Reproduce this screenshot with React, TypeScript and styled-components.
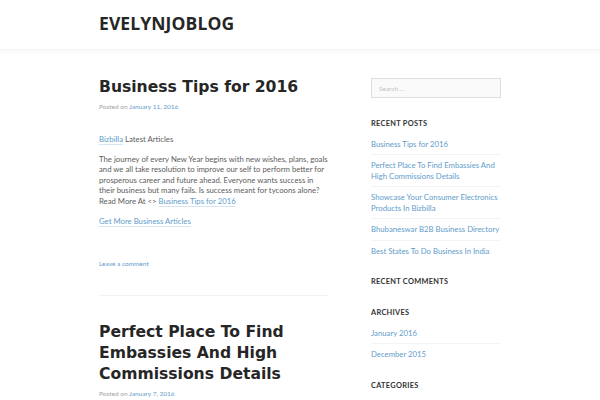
import styled, { createGlobalStyle } from 'styled-components'

const GlobalStyle = createGlobalStyle`
  html, body {
    margin: 0;
    padding: 0;
    background: #fff;
  }

  body {
    font-family: Lato, "Liberation Sans", sans-serif;
    color: #5c5c5c;
  }
`

const linkColor = '#5f9ccb'

const Header = styled.header`
  height: 50px;
  box-shadow: 0 2px 3px rgba(0, 0, 0, 0.03);
  border-bottom: 1px solid #f7f7f7;
  box-sizing: border-box;
`

const Inner = styled.div`
  width: 402px;
  margin: 0 auto;
`

const SiteTitle = styled.h1`
  margin: 0;
  padding-top: 13px;
  font-family: "Open Sans", "Liberation Sans", sans-serif;
  font-weight: 700;
  font-size: 17.5px;
  line-height: 20px;
  color: #262626;
  letter-spacing: 0.1px;
`

const Page = styled.div`
  width: 402px;
  margin: 0 auto;
  display: flex;
  gap: 42px;
`

const Main = styled.main`
  width: 230px;
  padding-top: 27px;
`

const Post = styled.article`
  padding-bottom: 26px;

  & + & {
    border-top: 1px solid #f2f2f2;
    padding-top: 26px;
  }
`

const PostTitle = styled.h2`
  margin: 0;
  font-family: "DejaVu Sans", Verdana, sans-serif;
  font-weight: 700;
  font-size: 15.6px;
  line-height: 21px;
  color: #262626;
`

const Meta = styled.div`
  margin-top: 3.5px;
  font-size: 6.5px;
  line-height: 10px;
  color: #a3a3a3;
`

const MetaLink = styled.a`
  color: ${linkColor};
  text-decoration: none;
`

const Content = styled.div`
  margin-top: 22px;
  font-size: 7.75px;
  line-height: 10.5px;

  p {
    margin: 0 0 9.5px;
  }
`

const A = styled.a`
  color: ${linkColor};
  text-decoration: underline;
  text-decoration-color: #d6e7f3;
  text-underline-offset: 1.5px;
`

const Footer = styled.div`
  margin-top: 33px;
  font-size: 6.5px;
  line-height: 10px;

  a {
    color: ${linkColor};
    text-decoration: none;
  }
`

const Sidebar = styled.aside`
  width: 130px;
  padding-top: 28px;
`

const Search = styled.input`
  box-sizing: border-box;
  width: 130px;
  height: 20px;
  border: 1px solid #dedede;
  background: #fafafa;
  padding: 0 7px;
  font-family: Lato, "Liberation Sans", sans-serif;
  font-size: 6.5px;
  margin: 0 0 21px;
  display: block;
  outline: none;

  &::placeholder {
    color: #c2c2c2;
  }
`

const Widget = styled.section`
  margin-bottom: 21px;
`

const WidgetTitle = styled.h3`
  margin: 0 0 4.5px;
  font-size: 7.4px;
  line-height: 10px;
  font-weight: 700;
  letter-spacing: 0.3px;
  text-transform: uppercase;
  color: #333;
`

const List = styled.ul`
  list-style: none;
  margin: 0;
  padding: 0;
`

const Item = styled.li`
  padding: 5px 0;
  border-bottom: 1px solid #f3f3f3;
  font-size: 7.75px;
  line-height: 10.5px;

  &:last-child {
    border-bottom: none;
    padding-bottom: 0;
  }

  a {
    color: ${linkColor};
    text-decoration: none;
  }
`

const recentPosts = [
  'Business Tips for 2016',
  'Perfect Place To Find Embassies And High Commissions Details',
  'Showcase Your Consumer Electronics Products In Bizbilla',
  'Bhubaneswar B2B Business Directory',
  'Best States To Do Business In India'
]

const archives = ['January 2016', 'December 2015']

export default function App() {
  return (
    <>
      <GlobalStyle />
      <Header>
        <Inner>
          <SiteTitle>EVELYNJOBLOG</SiteTitle>
        </Inner>
      </Header>
      <Page>
        <Main>
          <Post>
            <PostTitle>Business Tips for 2016</PostTitle>
            <Meta>
              Posted on <MetaLink href="#">January 11, 2016</MetaLink>
            </Meta>
            <Content>
              <p>
                <A href="#">Bizbilla</A> Latest Articles
              </p>
              <p>
                The journey of every New Year begins with new wishes, plans, goals
                and we all take resolution to improve our self to perform better for
                prosperous career and future ahead. Everyone wants success in
                their business but many fails. Is success meant for tycoons alone?
                Read More At &lt;&gt; <A href="#">Business Tips for 2016</A>
              </p>
              <p>
                <A href="#">Get More Business Articles</A>
              </p>
            </Content>
            <Footer>
              <a href="#">Leave a comment</a>
            </Footer>
          </Post>
          <Post>
            <PostTitle>Perfect Place To Find Embassies And High Commissions Details</PostTitle>
            <Meta>
              Posted on <MetaLink href="#">January 7, 2016</MetaLink>
            </Meta>
          </Post>
        </Main>
        <Sidebar>
          <Search placeholder="Search …" />
          <Widget>
            <WidgetTitle>Recent Posts</WidgetTitle>
            <List>
              {recentPosts.map(p => (
                <Item key={p}>
                  <a href="#">{p}</a>
                </Item>
              ))}
            </List>
          </Widget>
          <Widget>
            <WidgetTitle>Recent Comments</WidgetTitle>
          </Widget>
          <Widget>
            <WidgetTitle>Archives</WidgetTitle>
            <List>
              {archives.map(a => (
                <Item key={a}>
                  <a href="#">{a}</a>
                </Item>
              ))}
            </List>
          </Widget>
          <Widget>
            <WidgetTitle>Categories</WidgetTitle>
          </Widget>
        </Sidebar>
      </Page>
    </>
  )
}
